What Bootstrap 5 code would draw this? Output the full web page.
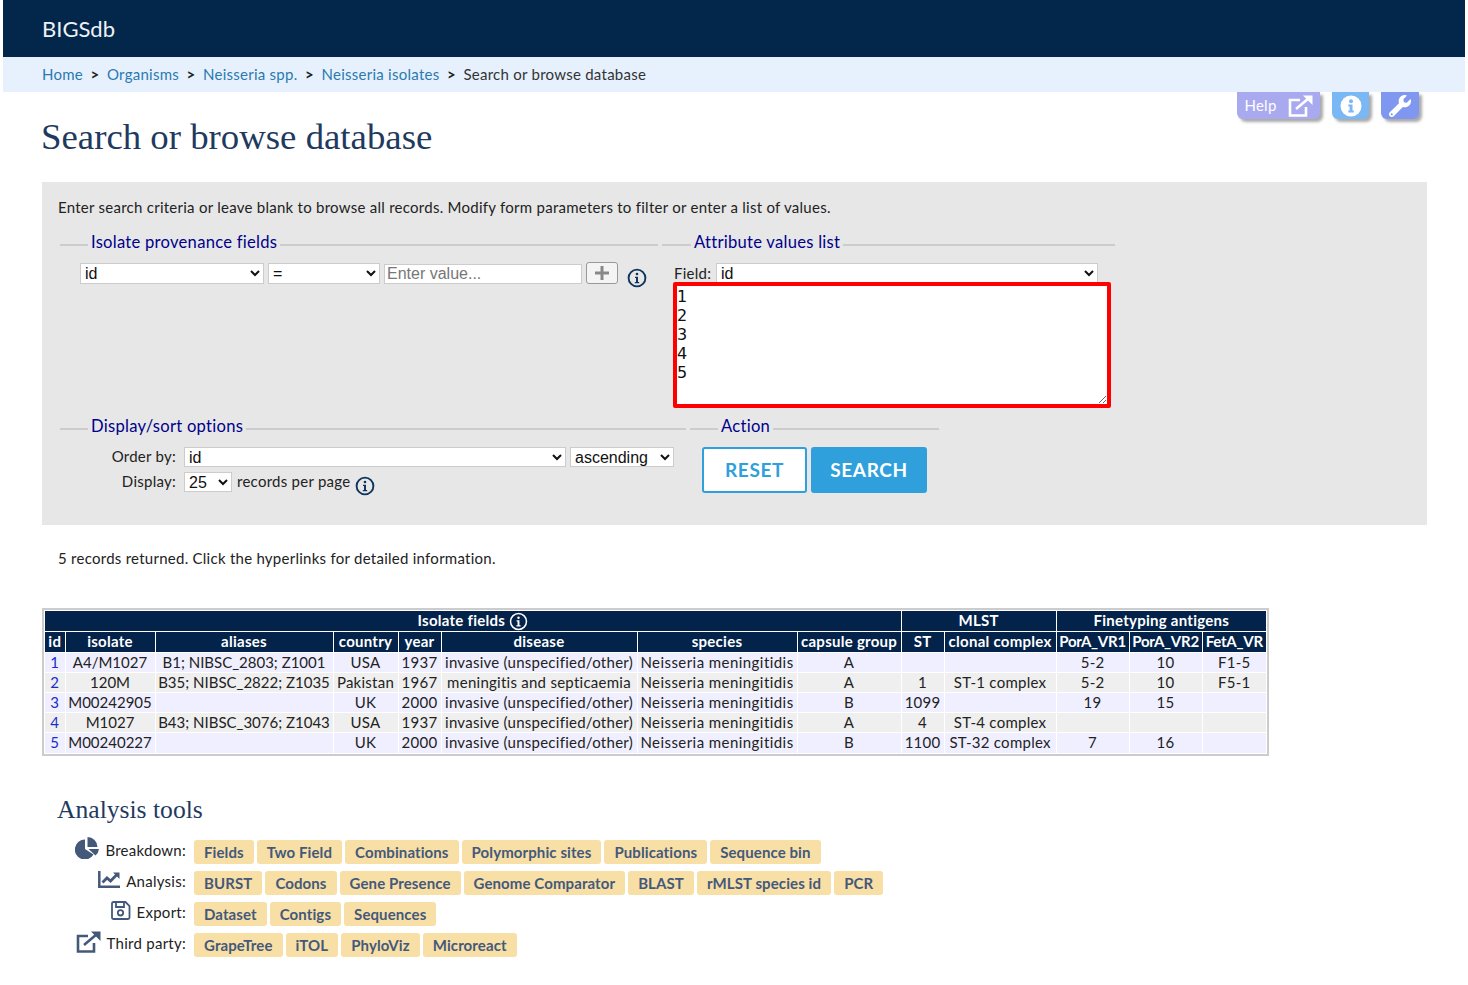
<!DOCTYPE html>
<html lang="en">
<head>
  <meta charset="UTF-8">
  <meta name="viewport" content="width=device-width, initial-scale=1">
  <title>Search or browse database</title>
  <link href="https://cdn.jsdelivr.net/npm/bootstrap@5.3.0/dist/css/bootstrap.min.css" rel="stylesheet">
  <style>
    body { font-family: "Lato", sans-serif; font-size: 15px; letter-spacing: .26px; color: #222; background: #fff; }
    .page-wrap { margin: 0 3px; position: relative; }
    .top-bar { background: #03274b; height: 57px; padding: 0 39px; }
    .top-bar .navbar-brand { color: #eef2f6; font-size: 22px; padding: 0; margin: 0; letter-spacing: 0; }
    .crumb-bar { background: #e6f1fd; height: 35px; padding: 0 39px; }
    .crumb-bar .breadcrumb { --bs-breadcrumb-divider: '>'; --bs-breadcrumb-margin-bottom: 0; --bs-breadcrumb-item-padding-x: 7.5px; height: 35px; align-items: center; font-size: 15px; }
    .crumb-bar .breadcrumb-item + .breadcrumb-item::before { color: #222; font-weight: 700; }
    .crumb-bar .breadcrumb-item a { color: #2a7ab0; text-decoration: none; }
    .crumb-bar .breadcrumb-item.active { color: #333; }
    .corner-tools { position: absolute; top: 92px; right: 46px; }
    .corner-tools .btn { height: 27px; padding: 0; border: 0; color: #fff; border-radius: 0 0 6px 6px; box-shadow: 3px 3px 3px #aaa; display: flex; align-items: center; justify-content: center; font-size: 15px; }
    .tool-help { width: 83px; background: #a9a9f0; gap: 11px; }
    .tool-info { width: 37px; background: #7ab8f5; }
    .tool-conf { width: 38px; background: #7f97ef; }
    h1.page-title { font-family: "Liberation Serif", serif; font-size: 36.8px; letter-spacing: 0; color: #1f3a5f; margin: 26px 0 26px 38px; line-height: 38px; font-weight: 400; }
    .search-box { margin: 0 38px 0 39px; background: #e7e7e7; height: 343px; padding: 15px 16px 0; }
    .search-box p { margin: 0 0 15px; line-height: 20px; }
    fieldset.grp { border-top: 2px solid #ccc; min-width: 0; }
    fieldset.grp legend { float: none; width: auto; font-size: 16.6px; line-height: 20px; color: #00008b; margin: 0 0 0 28px; padding: 0 3px 6px; }
    fieldset.grp-attr legend { margin-left: 29px; }
    .grp-prov { width: 598px; margin-left: 2px; }
    .grp-attr { width: 453px; margin-left: 4px; }
    .grp-disp { width: 626px; margin-left: 2px; }
    .grp-act { width: 249px; margin-left: 4px; }
    .plain-sel, .plain-inp { font-family: "Liberation Sans", sans-serif; font-size: 16px; letter-spacing: 0; height: 20px; line-height: 18px; padding: 0; background: #fff; border: 1px solid #ccc; border-radius: 0; color: #111; }
    .plain-sel.sel-up { height: 21px; margin-top: -1px; }
    .plain-inp { padding-left: 2px; }
    .plain-inp::placeholder { color: #777; opacity: 1; }
    .w-field { width: 184px; }
    .w-op { width: 112px; }
    .w-val { width: 198px; }
    .w-attr { width: 382px; }
    .w-order { width: 382px; }
    .w-dir { width: 104px; }
    .w-num { width: 48px; }
    .plus-btn { width: 32px; height: 22px; padding: 0; margin-top: -2px; border: 1px solid #999; border-radius: 3px; background: #f4f4f4; color: #888; line-height: 18px; display: flex; align-items: center; justify-content: center; }
    .info-gap { margin-left: 9px; }
    .prov-body { padding: 6px 0 0 20px; height: 158px; }
    .attr-body { padding: 6px 0 0 12px; }
    .field-lab { width: 42px; line-height: 18px; }
    .val-list { position: relative; display: block; width: 438px; height: 126px; border: 4px solid #f00; border-radius: 2px; padding: 1px 0 0 0; margin: -2px 0 0 -1px; font-family: "DejaVu Sans", sans-serif; font-size: 16px; line-height: 19px; letter-spacing: 0; color: #111; outline: 0; }
    .disp-body { padding: 5px 0 0 0; }
    .lab-r { width: 124px; text-align: right; padding-right: 8px; line-height: 18px; }
    .per-page { margin-left: 5px; line-height: 18px; }
    .per-info { margin: 4px 0 0 5px; }
    .order-row { margin-bottom: 5px; }
    .act-btn { height: 46px; font-size: 19px; font-weight: 700; letter-spacing: .6px; border: 2px solid #2fa0dc; border-radius: 3px; padding: 0; }
    .act-reset { width: 105px; background: #fff; color: #2fa0dc; }
    .act-search { width: 116px; background: #2fa0dc; color: #fff; }
    .act-body { padding: 5px 0 0 12px; }
    .result-note { margin: 23px 0 40px 55px; line-height: 20px; }
    .result-frame { margin-left: 39px; width: 1227px; border: 2px solid #ccc; padding: 1px; }
    table.iso-table { table-layout: fixed; width: 1221px; margin: 0; border-collapse: collapse; font-size: 15px; color: #222; }
    table.iso-table th, table.iso-table td { padding: 0; text-align: center; border: 1px solid #fff; white-space: nowrap; overflow: hidden; height: 20px; line-height: 19px; font-weight: 400; }
    table.iso-table tr:first-child th { border-top: 0; }
    table.iso-table tr th:first-child, table.iso-table tr td:first-child { border-left: 0; }
    table.iso-table tr th:last-child, table.iso-table tr td:last-child { border-right: 0; }
    table.iso-table tr:last-child td { border-bottom: 0; }
    table.iso-table th { background: #03234a; color: #fff; font-weight: 700; vertical-align: top; }
    table.iso-table thead tr:nth-child(2) th { height: 21px; line-height: 18px; }
    table.iso-table thead tr:nth-child(2) th:nth-child(n+11) { letter-spacing: -.24px; }
    table.iso-table tbody td:nth-child(2), table.iso-table tbody td:nth-child(3) { letter-spacing: 0; }
    table.iso-table tbody td:nth-child(7) { letter-spacing: .44px; }
    table.iso-table tr.row-a td { background: #efefff; }
    table.iso-table tr.row-b td { background: #efefef; }
    table.iso-table td a { color: #1a2ecb; text-decoration: none; }
    .ic-head { vertical-align: -5px; }
    .c1 { width: 20px; } .c2 { width: 90px; } .c3 { width: 178px; } .c4 { width: 65px; } .c5 { width: 43px; }
    .c6 { width: 196px; } .c7 { width: 160px; } .c8 { width: 104px; } .c9 { width: 43px; } .c10 { width: 112px; }
    .c11 { width: 73px; } .c12 { width: 73px; } .c13 { width: 64px; }
    h2.tools-title { font-family: "Liberation Serif", serif; font-size: 25.6px; letter-spacing: 0; color: #1f3a5f; font-weight: 400; margin: 39px 0 15px 54px; line-height: 30px; }
    .tool-rows { margin-left: 55px; gap: 7px; }
    .tool-lab { width: 128px; height: 24px; gap: 6px; line-height: 20px; color: #222; white-space: nowrap; }
    .tool-pills { margin-left: 8px; gap: 3px; }
    .pill-link { background: #f8dfa6; color: #44597a; font-weight: 700; font-size: 15px; letter-spacing: .1px; line-height: 24px; height: 24px; padding: 0 10px; border-radius: 3px; text-decoration: none; white-space: nowrap; }
    .ic-pie { margin-top: -3px; fill: #44597a; }
    .ic-save { margin-top: -1px; }
    .ic-ext { margin-top: -2px; }
  </style>
</head>
<body>
<div class="page-wrap">
  <nav class="navbar top-bar"><a class="navbar-brand" href="#">BIGSdb</a></nav>
  <nav class="crumb-bar">
    <ol class="breadcrumb">
      <li class="breadcrumb-item"><a href="#">Home</a></li>
      <li class="breadcrumb-item"><a href="#">Organisms</a></li>
      <li class="breadcrumb-item"><a href="#">Neisseria spp.</a></li>
      <li class="breadcrumb-item"><a href="#">Neisseria isolates</a></li>
      <li class="breadcrumb-item active">Search or browse database</li>
    </ol>
  </nav>

  <div class="corner-tools d-flex gap-2">
    <a class="btn tool-help" href="#">Help
      <svg width="25" height="22" viewBox="0 0 25 22" fill="none" stroke="#fff" stroke-width="2.6"><path d="M12 5H2v15.500h16V12"/><path d="M8 14 21 3"/><path d="M15 .5h9.500V10z" fill="#fff" stroke="none"/></svg>
    </a>
    <a class="btn tool-info ms-1" href="#">
      <svg width="22" height="22" viewBox="0 0 22 22"><circle cx="11" cy="11" r="10.500" fill="#fff"/><circle cx="11" cy="6.300" r="2" fill="#7ab8f5"/><path d="M8.300 9.500h4.200v6h1.300v2H8.300v-2h1.300v-4H8.300z" fill="#7ab8f5"/></svg>
    </a>
    <a class="btn tool-conf ms-1" href="#">
      <svg width="22" height="22" viewBox="0 0 512 512" fill="#fff"><path d="M507.73 109.1c-2.24-9.03-13.54-12.09-20.12-5.51l-74.36 74.36-67.88-11.31-11.31-67.88 74.36-74.36c6.62-6.62 3.43-17.9-5.66-20.16-47.38-11.74-99.55.91-136.58 37.93-39.64 39.64-50.55 97.1-34.05 147.2L18.74 402.76c-24.99 24.99-24.99 65.51 0 90.5 24.99 24.99 65.51 24.99 90.5 0l213.21-213.21c50.12 16.71 107.47 5.68 147.37-34.22 37.07-37.07 49.7-89.32 37.91-136.73zM64 472c-13.25 0-24-10.75-24-24 0-13.26 10.75-24 24-24s24 10.74 24 24c0 13.25-10.75 24-24 24z"/></svg>
    </a>
  </div>

  <h1 class="page-title">Search or browse database</h1>

  <form class="search-box">
    <p>Enter search criteria or leave blank to browse all records. Modify form parameters to filter or enter a list of values.</p>
    <div class="d-flex">
      <fieldset class="grp grp-prov">
        <legend>Isolate provenance fields</legend>
        <div class="prov-body d-flex align-items-start">
          <select class="plain-sel sel-up w-field"><option>id</option></select>
          <select class="plain-sel sel-up w-op ms-1"><option>=</option></select>
          <input class="plain-inp w-val ms-1" placeholder="Enter value...">
          <button type="button" class="plus-btn ms-1">
            <svg width="14" height="14" viewBox="0 0 14 14"><path d="M5.500 0h3v5.500H14v3H8.500V14h-3V8.500H0v-3h5.500z" fill="#888"/></svg>
          </button>
          <svg class="info-gap mt-1" width="20" height="20" viewBox="0 0 20 20"><circle cx="10" cy="10" r="8.400" fill="none" stroke="#0e3560" stroke-width="1.900"/><circle cx="10" cy="6" r="1.300" fill="#0e3560"/><path d="M8 8.700h3v5.200h1.200v1.400H7.800v-1.400H9v-3.800H8z" fill="#0e3560"/></svg>
        </div>
      </fieldset>
      <fieldset class="grp grp-attr">
        <legend>Attribute values list</legend>
        <div class="attr-body">
          <div class="d-flex">
            <span class="field-lab">Field:</span>
            <select class="plain-sel sel-up w-attr"><option>id</option></select>
          </div>
          <textarea class="val-list" spellcheck="false">1
2
3
4
5</textarea>
        </div>
      </fieldset>
    </div>
    <div class="d-flex">
      <fieldset class="grp grp-disp">
        <legend>Display/sort options</legend>
        <div class="disp-body">
          <div class="d-flex order-row">
            <span class="lab-r">Order by:</span>
            <select class="plain-sel w-order"><option>id</option></select>
            <select class="plain-sel w-dir ms-1"><option>ascending</option></select>
          </div>
          <div class="d-flex">
            <span class="lab-r">Display:</span>
            <select class="plain-sel w-num"><option>25</option></select>
            <span class="per-page">records per page</span>
            <svg class="per-info" width="20" height="20" viewBox="0 0 20 20"><circle cx="10" cy="10" r="8.400" fill="none" stroke="#0e3560" stroke-width="1.900"/><circle cx="10" cy="6" r="1.300" fill="#0e3560"/><path d="M8 8.700h3v5.200h1.200v1.400H7.800v-1.400H9v-3.800H8z" fill="#0e3560"/></svg>
          </div>
        </div>
      </fieldset>
      <fieldset class="grp grp-act">
        <legend>Action</legend>
        <div class="act-body d-flex gap-1">
          <button type="button" class="btn act-btn act-reset">RESET</button>
          <button type="button" class="btn act-btn act-search">SEARCH</button>
        </div>
      </fieldset>
    </div>
  </form>

  <p class="result-note">5 records returned. Click the hyperlinks for detailed information.</p>

  <div class="result-frame">
    <table class="iso-table">
      <colgroup>
        <col class="c1"><col class="c2"><col class="c3"><col class="c4"><col class="c5"><col class="c6"><col class="c7"><col class="c8"><col class="c9"><col class="c10"><col class="c11"><col class="c12"><col class="c13">
      </colgroup>
      <thead>
        <tr>
          <th colspan="8">Isolate fields <svg class="ic-head" width="19" height="19" viewBox="0 0 20 20"><circle cx="10" cy="10" r="8.400" fill="none" stroke="#fff" stroke-width="1.600"/><circle cx="10" cy="6" r="1.300" fill="#fff"/><path d="M8 8.700h3v5.200h1.200v1.400H7.800v-1.400H9v-3.800H8z" fill="#fff"/></svg></th>
          <th colspan="2">MLST</th>
          <th colspan="3">Finetyping antigens</th>
        </tr>
        <tr>
          <th>id</th><th>isolate</th><th>aliases</th><th>country</th><th>year</th><th>disease</th><th>species</th><th>capsule group</th><th>ST</th><th>clonal complex</th><th>PorA_VR1</th><th>PorA_VR2</th><th>FetA_VR</th>
        </tr>
      </thead>
      <tbody>
        <tr class="row-a"><td><a href="#">1</a></td><td>A4/M1027</td><td>B1; NIBSC_2803; Z1001</td><td>USA</td><td>1937</td><td>invasive (unspecified/other)</td><td>Neisseria meningitidis</td><td>A</td><td></td><td></td><td>5-2</td><td>10</td><td>F1-5</td></tr>
        <tr class="row-b"><td><a href="#">2</a></td><td>120M</td><td>B35; NIBSC_2822; Z1035</td><td>Pakistan</td><td>1967</td><td>meningitis and septicaemia</td><td>Neisseria meningitidis</td><td>A</td><td>1</td><td>ST-1 complex</td><td>5-2</td><td>10</td><td>F5-1</td></tr>
        <tr class="row-a"><td><a href="#">3</a></td><td>M00242905</td><td></td><td>UK</td><td>2000</td><td>invasive (unspecified/other)</td><td>Neisseria meningitidis</td><td>B</td><td>1099</td><td></td><td>19</td><td>15</td><td></td></tr>
        <tr class="row-b"><td><a href="#">4</a></td><td>M1027</td><td>B43; NIBSC_3076; Z1043</td><td>USA</td><td>1937</td><td>invasive (unspecified/other)</td><td>Neisseria meningitidis</td><td>A</td><td>4</td><td>ST-4 complex</td><td></td><td></td><td></td></tr>
        <tr class="row-a"><td><a href="#">5</a></td><td>M00240227</td><td></td><td>UK</td><td>2000</td><td>invasive (unspecified/other)</td><td>Neisseria meningitidis</td><td>B</td><td>1100</td><td>ST-32 complex</td><td>7</td><td>16</td><td></td></tr>
      </tbody>
    </table>
  </div>

  <h2 class="tools-title">Analysis tools</h2>
  <div class="tool-rows d-flex flex-column">
    <div class="d-flex">
      <div class="tool-lab d-flex justify-content-end">
        <svg class="ic-pie" width="24" height="22" viewBox="0 0 24 22"><path d="M10 2.500A10 10 0 1 0 18.500 17.500L10 12z"/><path d="M12.500 0A10 10 0 0 1 22.500 10H12.500z"/><path d="M13.500 12H24A10.500 10.500 0 0 1 20.500 18.500z"/></svg>
        <span>Breakdown:</span>
      </div>
      <div class="tool-pills d-flex">
        <a class="pill-link" href="#">Fields</a><a class="pill-link" href="#">Two Field</a><a class="pill-link" href="#">Combinations</a><a class="pill-link" href="#">Polymorphic sites</a><a class="pill-link" href="#">Publications</a><a class="pill-link" href="#">Sequence bin</a>
      </div>
    </div>
    <div class="d-flex">
      <div class="tool-lab d-flex justify-content-end">
        <svg width="22" height="17" viewBox="0 0 22 17"><path d="M1.300 0v15.700H22" fill="none" stroke="#44597a" stroke-width="2.500"/><path d="M4.500 11.500 9 7l3.500 3L19 3.500" fill="none" stroke="#44597a" stroke-width="2.800"/><path d="M15 1.500h6.500V8z" fill="#44597a"/></svg>
        <span>Analysis:</span>
      </div>
      <div class="tool-pills d-flex">
        <a class="pill-link" href="#">BURST</a><a class="pill-link" href="#">Codons</a><a class="pill-link" href="#">Gene Presence</a><a class="pill-link" href="#">Genome Comparator</a><a class="pill-link" href="#">BLAST</a><a class="pill-link" href="#">rMLST species id</a><a class="pill-link" href="#">PCR</a>
      </div>
    </div>
    <div class="d-flex">
      <div class="tool-lab d-flex justify-content-end">
        <svg class="ic-save" width="20" height="19" viewBox="0 0 20 19" fill="none" stroke="#44597a" stroke-width="1.800"><path d="M2.500 1h12l4 4v11.500a1.500 1.500 0 0 1-1.500 1.500H2.500A1.500 1.500 0 0 1 1 16.500v-14A1.500 1.500 0 0 1 2.500 1z"/><path d="M5 1v5h8V1"/><circle cx="9.500" cy="11.800" r="2.700"/></svg>
        <span>Export:</span>
      </div>
      <div class="tool-pills d-flex">
        <a class="pill-link" href="#">Dataset</a><a class="pill-link" href="#">Contigs</a><a class="pill-link" href="#">Sequences</a>
      </div>
    </div>
    <div class="d-flex">
      <div class="tool-lab d-flex justify-content-end">
        <svg class="ic-ext" width="25" height="22" viewBox="0 0 25 22" fill="none" stroke="#44597a" stroke-width="2.600"><path d="M12 5H2v15.500h16V12"/><path d="M8 14 21 3"/><path d="M15 .5h9.500V10z" fill="#44597a" stroke="none"/></svg>
        <span>Third party:</span>
      </div>
      <div class="tool-pills d-flex">
        <a class="pill-link" href="#">GrapeTree</a><a class="pill-link" href="#">iTOL</a><a class="pill-link" href="#">PhyloViz</a><a class="pill-link" href="#">Microreact</a>
      </div>
    </div>
  </div>
</div>
<script src="https://cdn.jsdelivr.net/npm/bootstrap@5.3.0/dist/js/bootstrap.bundle.min.js"></script>
</body>
</html>
